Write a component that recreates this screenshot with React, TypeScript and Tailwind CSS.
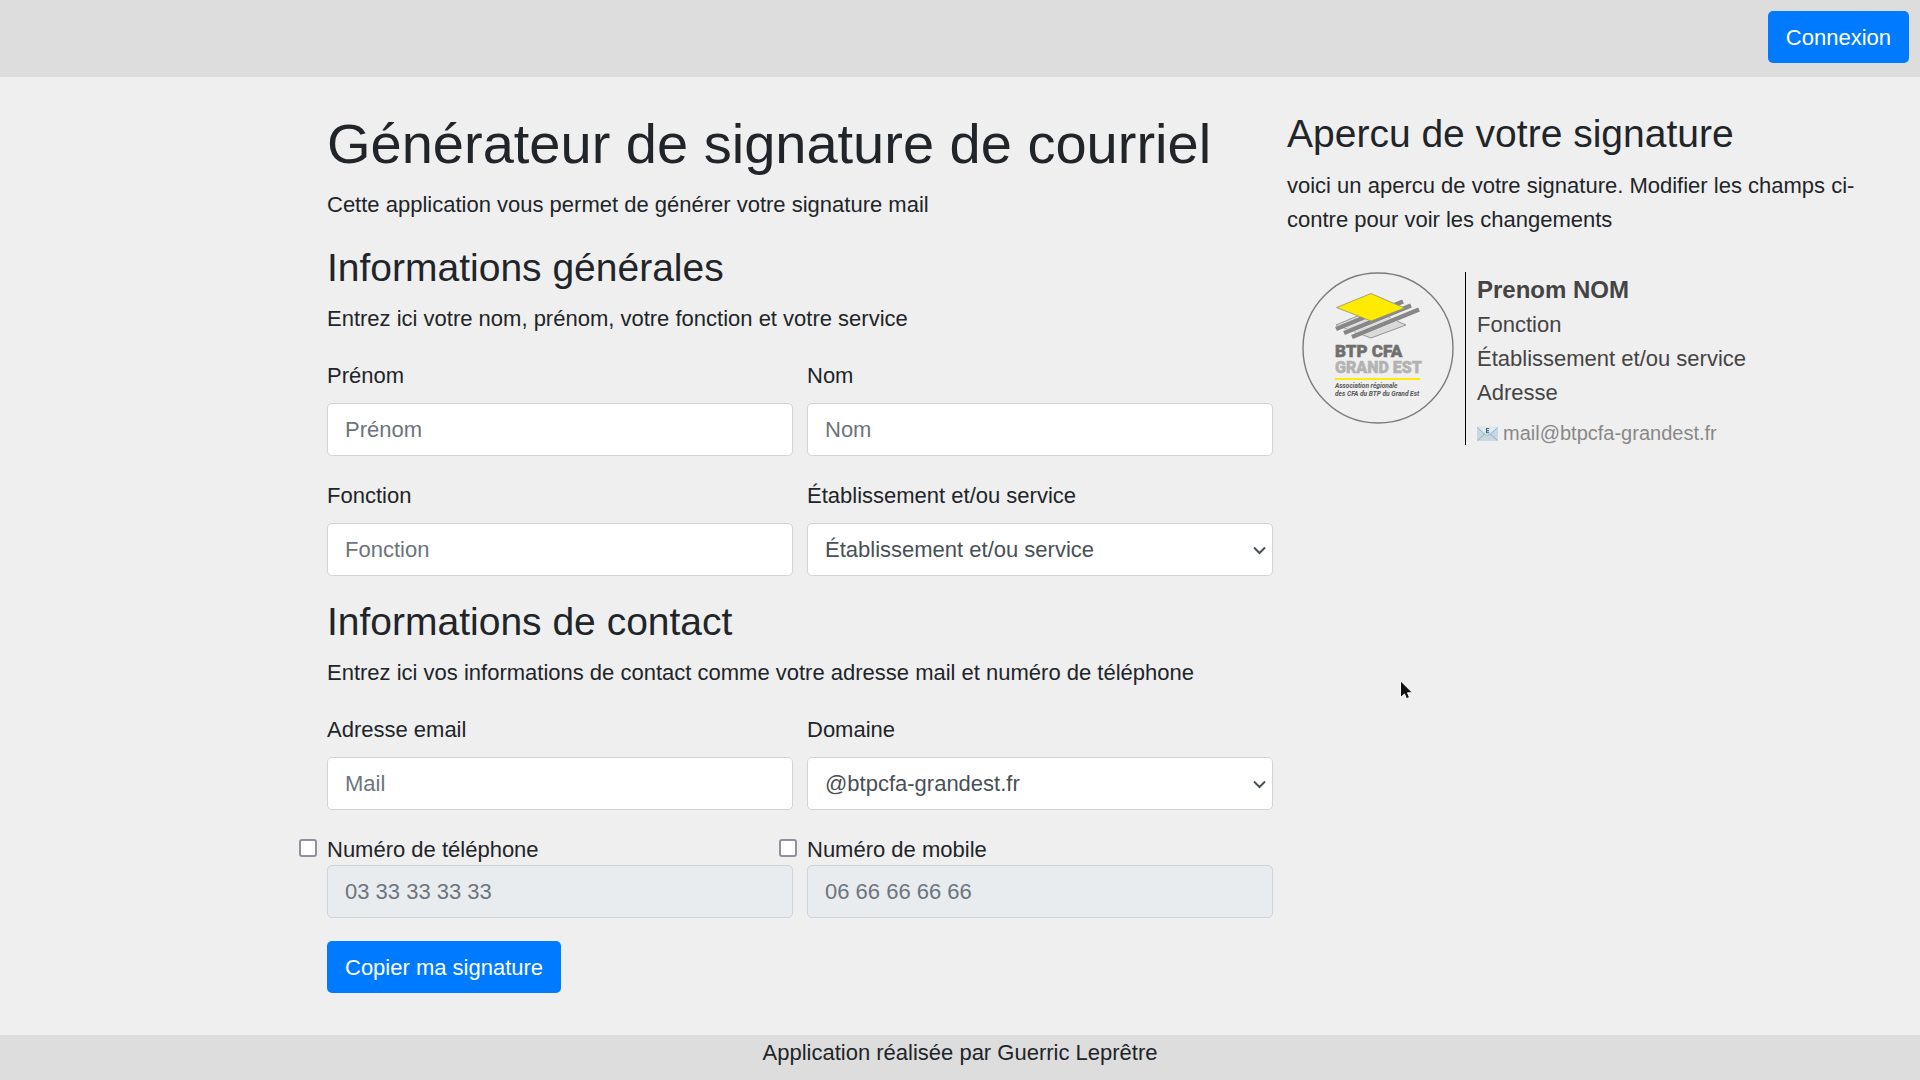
import { useState, type ReactNode } from "react";

const controlClass =
  "block h-[53px] w-full rounded-[5px] border border-[#ced4da] bg-white px-[17px] text-[#495057] placeholder:text-[#6c757d] disabled:bg-[#e9ecef] disabled:opacity-100";

const buttonClass = "h-[52px] rounded-[5px] bg-[#007bff] px-[18px] pt-px text-white";

function Field({ id, label, children }: { id: string; label: string; children: ReactNode }) {
  return (
    <div className="min-w-0">
      <label htmlFor={id} className="mb-[9px] block leading-[36px]">
        {label}
      </label>
      {children}
    </div>
  );
}

function SelectBox({ id, option }: { id: string; option: string }) {
  return (
    <div className="relative">
      <select id={id} className={`${controlClass} appearance-none`}>
        <option>{option}</option>
      </select>
      <svg
        className="pointer-events-none absolute top-1/2 right-[7px] h-[13px] w-[13px] -translate-y-1/2"
        viewBox="0 0 13 13"
        fill="none"
        stroke="#495057"
        strokeWidth="2"
        aria-hidden="true"
      >
        <path d="M1 4 6.500 9.500 12 4" />
      </svg>
    </div>
  );
}

function PhoneField({ id, label, placeholder }: { id: string; label: string; placeholder: string }) {
  const [enabled, setEnabled] = useState(false);
  return (
    <div className="min-w-0">
      <div className="-ml-7 flex h-[33px] items-start gap-[10px]">
        <input
          id={`${id}-check`}
          type="checkbox"
          checked={enabled}
          onChange={(e) => setEnabled(e.target.checked)}
          className="mt-[7px] h-[18px] w-[18px] shrink-0 appearance-none rounded-[3px] border-2 border-[#8f8f9d] bg-white checked:bg-[#007bff]"
        />
        <label htmlFor={`${id}-check`} className="leading-[36px]">
          {label}
        </label>
      </div>
      <input id={id} aria-label={label} type="tel" disabled={!enabled} placeholder={placeholder} className={controlClass} />
    </div>
  );
}

function Logo() {
  return (
    <svg className="h-[152px] w-[152px] shrink-0" viewBox="0 0 152 152" role="img" aria-label="BTP CFA Grand Est">
      <circle cx="76" cy="76" r="75" fill="none" stroke="#7b7b7b" strokeWidth="1.4" />
      <path d="M34 53 70 38 104 53 69 66Z" fill="#d9d9d9" stroke="#8c8c8c" strokeWidth="0.9" />
      <g stroke="#efefef" strokeWidth="5.6">
        <path d="M34 57 101 29.5" />
        <path d="M42 61 109 33.5" />
        <path d="M50 65 117 37.5" />
      </g>
      <g stroke="#878787" strokeWidth="4.5">
        <path d="M34 57 101 29.5" />
        <path d="M42 61 109 33.5" />
        <path d="M50 65 117 37.5" />
      </g>
      <path d="M34.5 35.5 69 21.5 102.500 36 69 49Z" fill="#ffeb00" stroke="#9a9a78" strokeWidth="0.9" />
      <g fontFamily="Roboto, 'Liberation Sans', sans-serif">
        <g strokeWidth="0.5">
          <text x="33" y="85" fontSize="17" fontWeight="900" fill="#6f6f6e" stroke="#6f6f6e">BTP CFA</text>
          <text x="33" y="101" fontSize="16" fontWeight="900" fill="#b2b2b2" stroke="#b2b2b2">GRAND EST</text>
        </g>
        <g fontSize="6.6" fontWeight="700" fontStyle="italic" fill="#555555">
          <text x="33" y="116">Association régionale</text>
          <text x="33" y="124">des CFA du BTP du Grand Est</text>
        </g>
      </g>
      <path d="M33 107H118" stroke="#ffeb00" strokeWidth="2" />
    </svg>
  );
}

function MailIcon() {
  return (
    <svg className="h-[15px] w-[21px] shrink-0" viewBox="0 0 21 15" aria-hidden="true">
      <rect width="21" height="15" rx="1" fill="#c8d8e2" />
      <path d="M0 1Q0 0 1 0H20Q21 0 21 1L13 8.500Q10.500 10.500 8 8.500Z" fill="#dfe9ef" />
      <path
        d="M0.500 14.500 7.500 8M20.500 14.500 13.500 8M0.500 1.500 8 8.500Q10.500 10.500 13 8.500L20.500 1.500"
        fill="none"
        stroke="#91a9b9"
        strokeWidth="0.9"
      />
      <path d="M12.200 2.500H9.500V6.800H12.200M9.500 4.600H11.900" fill="none" stroke="#47667e" strokeWidth="1.100" />
    </svg>
  );
}

function Pointer() {
  return (
    <svg className="pointer-events-none absolute top-[680px] left-[1400px] h-5 w-[14px]" viewBox="0 0 14 20" aria-hidden="true">
      <path d="M0.500 0.800V17.500L4.500 14 6.500 18.700 9.500 17.500 7.500 12.800H12.500Z" fill="#111111" stroke="#ffffff" />
    </svg>
  );
}

export default function App() {
  return (
    <div className="relative flex min-h-screen flex-col bg-[#efefef] font-['Liberation_Sans',Arial,sans-serif] text-[22px] leading-[34px] text-[#212529]">
      <header className="flex justify-end bg-[#dddddd] px-[11px] pt-[11px] pb-[14px]">
        <button type="button" className={buttonClass}>
          Connexion
        </button>
      </header>

      <div className="grid grow grid-cols-12 pt-[33px]">
        <main className="col-span-6 col-start-3 px-[7px]">
          <h1 className="mb-[10px] text-[56px] leading-[67px]">Générateur de signature de courriel</h1>
          <p className="mb-[21px] leading-[36px]">Cette application vous permet de générer votre signature mail</p>
          <form>
            <h2 className="mb-[10px] text-[39px] leading-[47px]">Informations générales</h2>
            <p className="mb-[21px] leading-[36px]">Entrez ici votre nom, prénom, votre fonction et votre service</p>
            <div className="mb-[22px] grid grid-cols-2 gap-x-[14px] gap-y-[22px]">
              <Field id="prenom" label="Prénom">
                <input id="prenom" type="text" placeholder="Prénom" className={controlClass} />
              </Field>
              <Field id="nom" label="Nom">
                <input id="nom" type="text" placeholder="Nom" className={controlClass} />
              </Field>
              <Field id="fonction" label="Fonction">
                <input id="fonction" type="text" placeholder="Fonction" className={controlClass} />
              </Field>
              <Field id="service" label="Établissement et/ou service">
                <SelectBox id="service" option="Établissement et/ou service" />
              </Field>
            </div>
            <h2 className="mb-[10px] text-[39px] leading-[47px]">Informations de contact</h2>
            <p className="mb-[21px] leading-[36px]">
              Entrez ici vos informations de contact comme votre adresse mail et numéro de téléphone
            </p>
            <div className="mb-[23px] grid grid-cols-2 gap-x-[14px] gap-y-[22px]">
              <Field id="mail" label="Adresse email">
                <input id="mail" type="text" placeholder="Mail" className={controlClass} />
              </Field>
              <Field id="domaine" label="Domaine">
                <SelectBox id="domaine" option="@btpcfa-grandest.fr" />
              </Field>
              <PhoneField id="telephone" label="Numéro de téléphone" placeholder="03 33 33 33 33" />
              <PhoneField id="mobile" label="Numéro de mobile" placeholder="06 66 66 66 66" />
            </div>
            <button type="button" className={buttonClass}>
              Copier ma signature
            </button>
          </form>
        </main>

        <aside className="col-span-4 px-[7px]">
          <h2 className="mb-3 text-[39px] leading-[47px]">Apercu de votre signature</h2>
          <p>voici un apercu de votre signature. Modifier les champs ci-contre pour voir les changements</p>
          <div className="mt-[35px] flex items-start gap-[11px] pl-[15px] text-[#444444]">
            <Logo />
            <div className="border-l border-black pl-[11px]">
              <p className="text-[24px] leading-[36px] font-bold">Prenom NOM</p>
              <p>Fonction</p>
              <p>Établissement et/ou service</p>
              <p>Adresse</p>
              <a href="mailto:mail@btpcfa-grandest.fr" className="mt-[11px] flex items-center gap-[5px] text-[20px] leading-[24px] text-[#888888]">
                <MailIcon />
                mail@btpcfa-grandest.fr
              </a>
            </div>
          </div>
        </aside>
      </div>

      <footer className="bg-[#dddddd] pb-[9px] text-center leading-[36px]">Application réalisée par Guerric Leprêtre</footer>
      <Pointer />
    </div>
  );
}
